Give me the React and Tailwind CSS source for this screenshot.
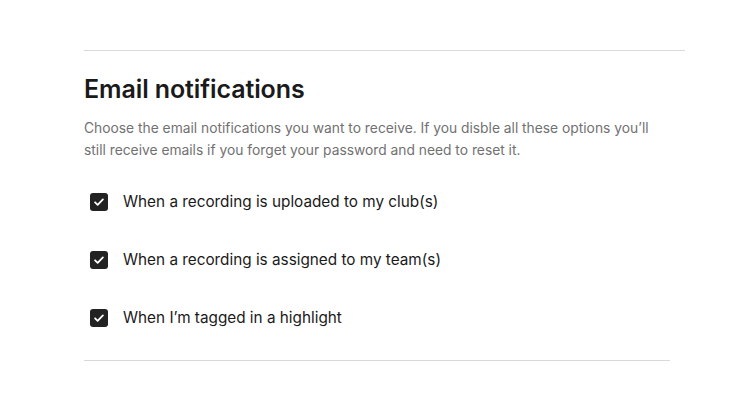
import React from "react";

const options = [
  "When a recording is uploaded to my club(s)",
  "When a recording is assigned to my team(s)",
  "When I’m tagged in a highlight",
];

const CheckIcon = () => (
  <svg viewBox="0 0 16 16" className="w-[12px] h-[12px]" fill="none">
    <path d="M2.8 8.4l3.4 3.3L13.2 4.6" stroke="white" strokeWidth="2.4" strokeLinecap="round" strokeLinejoin="round" />
  </svg>
);

const App = () => {
  const [checked, setChecked] = React.useState([true, true, true]);

  return (
    <div className="bg-white min-h-[407px] w-[743px] pt-[50px] pl-[84px]" style={{ fontFamily: "Inter, 'Noto Sans', sans-serif" }}>
      <hr className="w-[601px] border-t border-[#d9d9d9]" />
      <div className="w-[586px]">
        <h2 className="mt-[22px] text-[25px] leading-[32px] font-semibold text-[#1a1a1a] tracking-[-0.1px]">
          Email notifications
        </h2>
        <p className="mt-[12px] text-[13.8px] leading-[22px] text-[#717171] w-[586px]">
          Choose the email notifications you want to receive. If you disble all these options you’ll still receive emails if you forget your password and need to reset it.
        </p>
        <div className="mt-[32px] flex flex-col gap-[40px] pl-[6px]">
          {options.map((label, i) => (
            <label key={label} className="flex items-center gap-[15px] h-[18px] cursor-pointer">
              <button
                type="button"
                onClick={() => setChecked((c) => c.map((v, j) => (j === i ? !v : v)))}
                className={`w-[18px] h-[18px] rounded-[3px] flex items-center justify-center ${checked[i] ? "bg-[#222222]" : "border border-[#999] bg-white"}`}
              >
                {checked[i] && <CheckIcon />}
              </button>
              <span className="text-[15.3px] text-[#1a1a1a]">{label}</span>
            </label>
          ))}
        </div>
        <hr className="mt-[33px] w-[586px] border-t border-[#d9d9d9]" />
      </div>
    </div>
  );
};

export default App;
